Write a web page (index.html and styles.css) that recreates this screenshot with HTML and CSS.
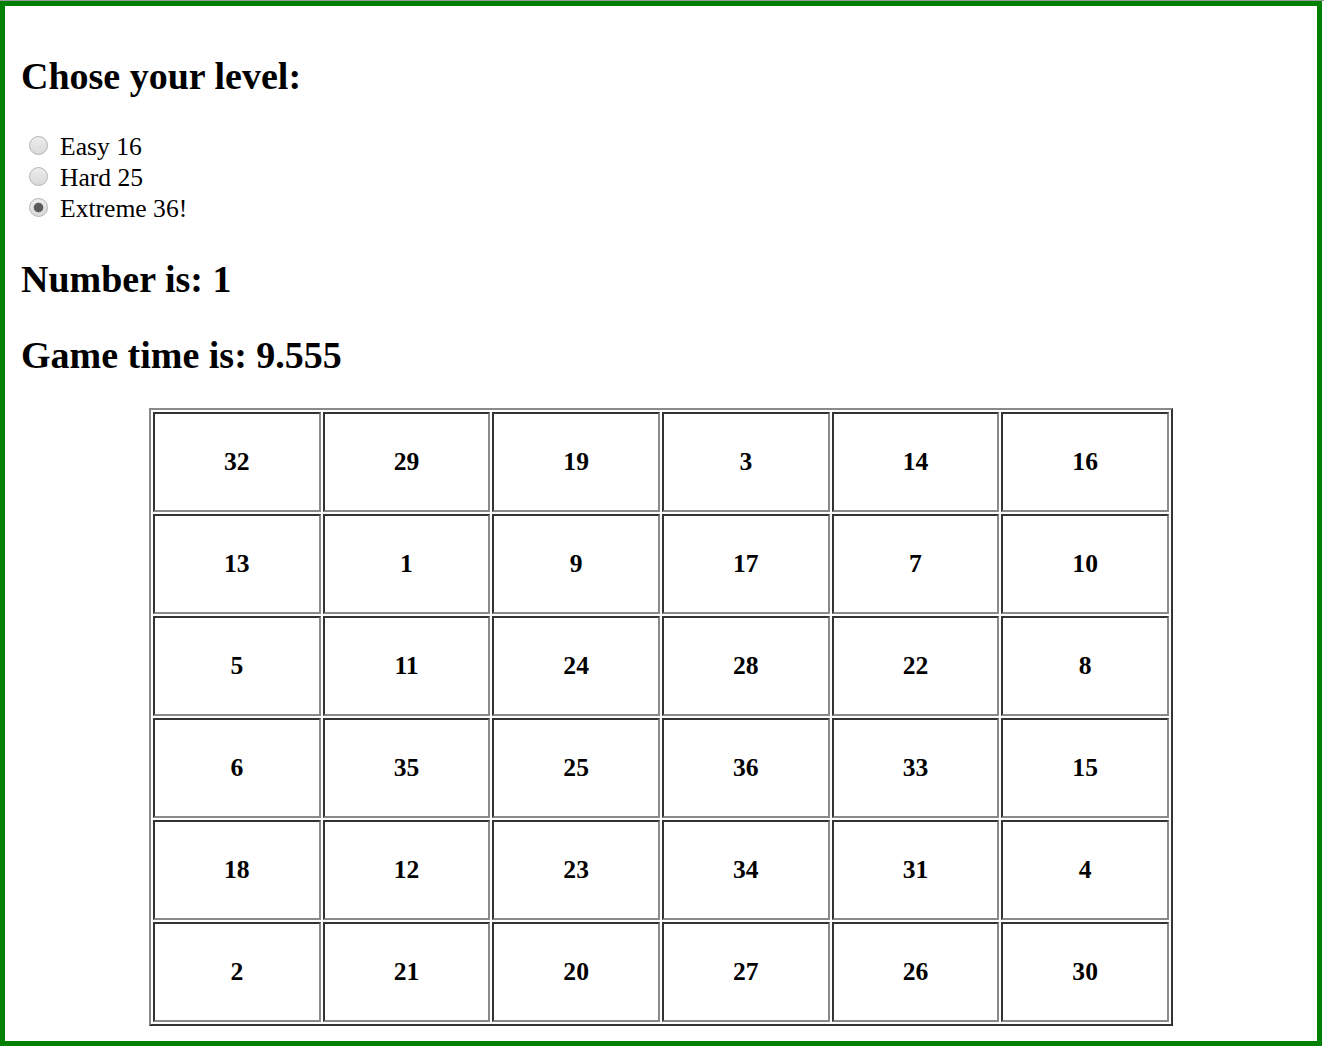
FILE: index.html
```html
<!DOCTYPE html>
<html lang="en">
<head>
<meta charset="utf-8">
<title>Touch Nums</title>
<link rel="stylesheet" href="styles.css">
</head>
<body>
<div class="frame">
  <h2 class="title">Chose your level:</h2>
  <div class="levels">
    <label class="level"><input type="radio" name="level" class="radio"><span class="level-text">Easy 16</span></label>
    <label class="level"><input type="radio" name="level" class="radio"><span class="level-text">Hard 25</span></label>
    <label class="level"><input type="radio" name="level" class="radio" checked><span class="level-text">Extreme 36!</span></label>
  </div>
  <h2 class="status status-number">Number is: 1</h2>
  <h2 class="status status-time">Game time is: 9.555</h2>
  <table class="board">
    <tbody>
      <tr><td>32</td><td>29</td><td>19</td><td>3</td><td>14</td><td>16</td></tr>
      <tr><td>13</td><td>1</td><td>9</td><td>17</td><td>7</td><td>10</td></tr>
      <tr><td>5</td><td>11</td><td>24</td><td>28</td><td>22</td><td>8</td></tr>
      <tr><td>6</td><td>35</td><td>25</td><td>36</td><td>33</td><td>15</td></tr>
      <tr><td>18</td><td>12</td><td>23</td><td>34</td><td>31</td><td>4</td></tr>
      <tr><td>2</td><td>21</td><td>20</td><td>27</td><td>26</td><td>30</td></tr>
    </tbody>
  </table>
</div>
</body>
</html>
```
FILE: styles.css
```css
html, body {
  margin: 0;
  padding: 0;
  background: #fff;
}

body {
  border-top: 1px solid #9a9a9a;
  font-family: "Liberation Serif", "Times New Roman", serif;
  color: #000;
}

.frame {
  box-sizing: border-box;
  width: 1322px;
  height: 1045px;
  border: 5px solid #008000;
  padding: 0 16px;
  overflow: hidden;
}

h2 {
  font-size: 38px;
  line-height: 44px;
  font-weight: bold;
  margin: 0;
}

.title {
  margin-top: 48px;
}

.levels {
  margin-top: 33px;
  display: flex;
  flex-direction: column;
}

.level {
  display: flex;
  align-items: center;
  height: 31px;
  font-size: 25.6px;
  line-height: 31px;
}

.radio {
  -webkit-appearance: none;
  appearance: none;
  box-sizing: border-box;
  width: 19px;
  height: 19px;
  margin: 0 0 3px 8px;
  border: 1px solid #b4b4b4;
  border-radius: 50%;
  background: linear-gradient(#ededed, #d9d9d9);
  flex: none;
}

.radio:checked {
  background: radial-gradient(circle, #595959 0, #595959 4px, #7a7a7a 4.6px, transparent 5.2px), linear-gradient(#ededed, #d9d9d9);
}

.level-text {
  margin-left: 12px;
}

.status-number {
  margin-top: 33px;
}

.status-time {
  margin-top: 32px;
}

.board {
  margin: 31px auto 0;
  width: 1024px;
  table-layout: fixed;
  border-collapse: separate;
  border-spacing: 2px;
  border-width: 2px;
  border-style: solid;
  border-color: #8a8a8a #333 #333 #8a8a8a;
}

.board td {
  box-sizing: border-box;
  height: 100px;
  padding: 0;
  border-width: 2px;
  border-style: solid;
  border-color: #333 #8a8a8a #8a8a8a #333;
  text-align: center;
  vertical-align: middle;
  font-size: 25.6px;
  font-weight: bold;
}
```
